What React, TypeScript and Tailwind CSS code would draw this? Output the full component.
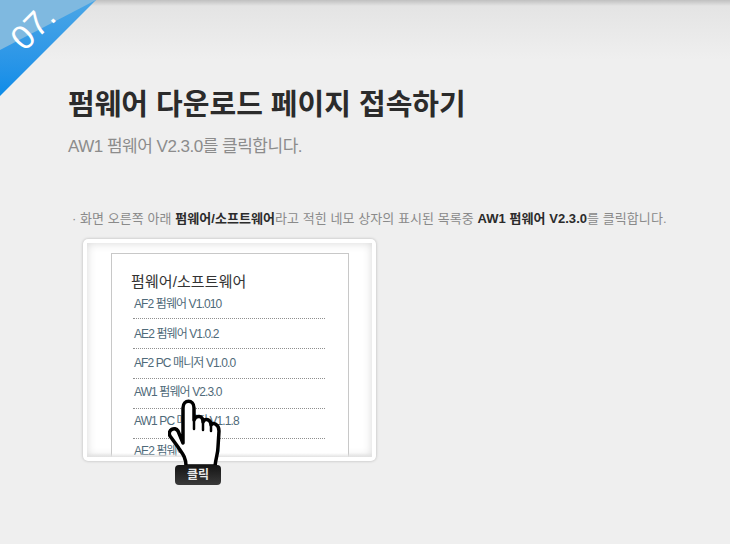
const FONT = 'font-["Liberation_Sans","Noto_Sans_CJK_KR",sans-serif]';

const items = [
  { label: "AF2 펌웨어 V1.010", cls: "h-[26px] pt-[2px] border-b" },
  { label: "AE2 펌웨어 V1.0.2", cls: "h-[30px] pt-[6px] border-b" },
  { label: "AF2 PC 매니저 V1.0.0", cls: "h-[30px] pt-[5px] border-b" },
  { label: "AW1 펌웨어 V2.3.0", cls: "h-[30px] pt-[4px] border-b" },
  { label: "AW1 PC 매니저 V1.1.8", cls: "h-[30px] pt-[3px] border-b" },
  { label: "AE2 펌웨어 V1.0.0", cls: "h-[30px] pt-[3px]" },
];

function Ribbon() {
  return (
    <div className="absolute left-0 top-0 w-[96px] h-[96px] pl-[9px] pt-[8px]">
      <div className="absolute inset-0 [clip-path:polygon(0_0,100%_0,0_100%)] bg-gradient-to-b from-[#4aa6e6] to-[#0a8ce8]">
        <div className="w-[96px] h-[50px] [clip-path:polygon(0_0,100%_0,0_100%)] bg-[#7fb9e0]" />
      </div>
      <div className="relative w-fit -rotate-45 text-white text-[34px] leading-[38px]">07.</div>
    </div>
  );
}

function ClickHand() {
  return (
    <div className="absolute left-[168px] top-[399px] flex flex-col items-start">
      <svg width="54" height="68" viewBox="0 0 54 68">
        <path
          d="M15 44 L15 9 C15 0 26 0 26 9 L26 21 C28 16 35 16 35 23 C37 19 43 20 43 26 C45 23 51 25 51 32 L50 48 C50 54 48 58 47 67 L18 67 C18 58 14 54 10 48 L2 37 C-1 31 7 27 10 32 Z"
          fill="#fff"
          stroke="#000"
          strokeWidth="3.5"
          strokeLinejoin="round"
        />
        <path d="M26 21 L26 30 M35 23 L35 31 M43 26 L43 32" stroke="#000" strokeWidth="2.5" strokeLinecap="round" />
      </svg>
      <div className="-mt-[2px] ml-[7px] w-[46px] h-[20px] rounded-[4px] bg-gradient-to-b from-[#151515] to-[#3a3a3a] text-[#e8e8e8] text-[12px] leading-[20px] font-bold text-center">
        클릭
      </div>
    </div>
  );
}

export default function App() {
  return (
    <div className={`relative w-[730px] h-[544px] overflow-hidden bg-[#efefef] flex flex-col ${FONT}`}>
      <div className="h-[60px] shrink-0 bg-gradient-to-b from-[#c0c0c0] via-[#e4e4e4] via-[10%] to-[#efefef]" />
      <Ribbon />

      <div className="flex flex-col gap-[11px] pl-[68px] pt-[25px]">
        <h1 className="text-[29px] leading-[40px] font-bold text-[#2b2b2b]">펌웨어 다운로드 페이지 접속하기</h1>
        <p className="text-[17px] leading-[22px] text-[#8c8c8c] tracking-[-0.5px]">AW1 펌웨어 V2.3.0를 클릭합니다.</p>
      </div>

      <p className="mt-[51px] pl-[72px] text-[13px] leading-[20px] text-[#8a8a8a] tracking-[0.06px] whitespace-nowrap">
        · 화면 오른쪽 아래 <b className="text-[#2b2b2b]">펌웨어/소프트웨어</b>라고 적힌 네모 상자의 표시된 목록중 <b className="text-[#2b2b2b]">AW1 펌웨어 V2.3.0</b>를 클릭합니다.
      </p>

      <div className="relative ml-[83px] mt-[10px] w-[293px] h-[222px] rounded-[5px] bg-white p-[4px] shadow-[0_0_3px_rgba(0,0,0,0.25)]">
        <div className="h-[214px] overflow-hidden bg-white shadow-[inset_0_0_10px_rgba(0,0,0,0.16)] pl-[24px] pt-[10px]">
          <div className="w-[238px] h-[204px] overflow-hidden border border-b-0 border-[#c8c8c8] bg-white pl-[21px] pr-[23px] flex flex-col">
            <div className="-ml-[2px] h-[39px] shrink-0 pt-[17px] text-[15px] leading-[22px] text-[#333] tracking-[0.1px]">펌웨어/소프트웨어</div>
            {items.map((item) => (
              <div
                key={item.label}
                className={`${item.cls} shrink-0 pl-[1px] text-[12px] leading-[18px] text-[#4f6a79] tracking-[-0.9px] border-dotted border-[#8f8f8f] whitespace-nowrap`}
              >
                {item.label}
              </div>
            ))}
          </div>
        </div>
        <div className="absolute left-[4px] right-[4px] bottom-[4px] h-[4px] bg-gradient-to-b from-transparent to-[#e2e2e2]" />
      </div>

      <ClickHand />
    </div>
  );
}
